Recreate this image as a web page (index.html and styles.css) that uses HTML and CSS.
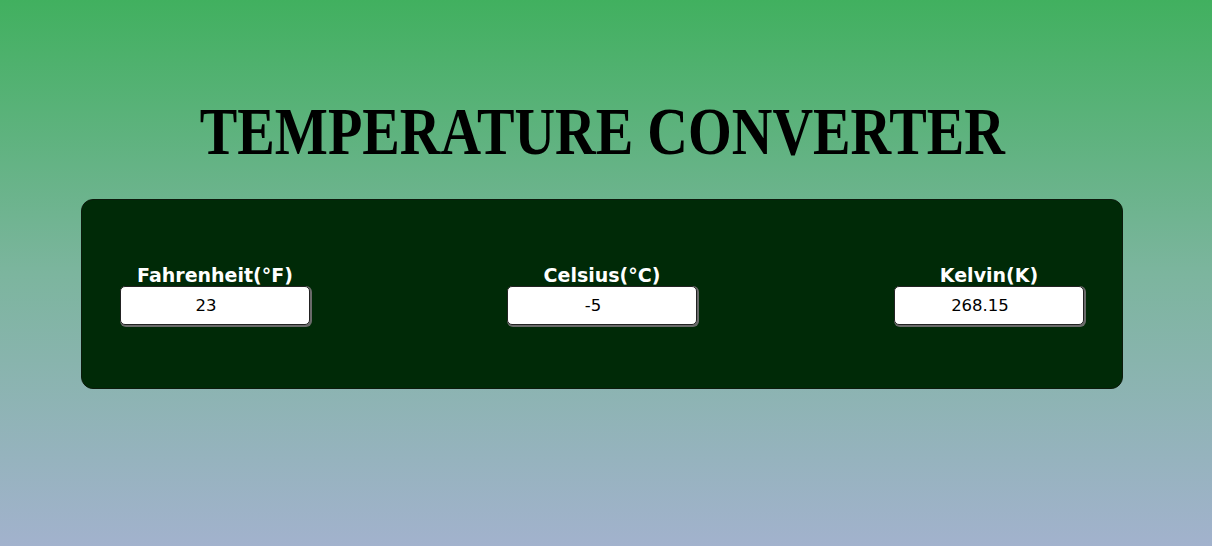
FILE: index.html
```html
<!DOCTYPE html>
<html lang="en">
<head>
<meta charset="utf-8">
<title>Temperature Converter</title>
<link rel="stylesheet" href="styles.css">
</head>
<body>
<main class="page">
  <h1 class="title"><span class="title-text">TEMPERATURE CONVERTER</span></h1>
  <section class="card">
    <div class="field">
      <label class="field-label" for="f">Fahrenheit(°F)</label>
      <input class="field-input" id="f" type="text" value="23">
    </div>
    <div class="field">
      <label class="field-label" for="c">Celsius(°C)</label>
      <input class="field-input" id="c" type="text" value="-5">
    </div>
    <div class="field">
      <label class="field-label" for="k">Kelvin(K)</label>
      <input class="field-input" id="k" type="text" value="268.15">
    </div>
  </section>
</main>
</body>
</html>
```
FILE: styles.css
```css
html, body {
  margin: 0;
  padding: 0;
}
body {
  min-height: 546px;
  background: linear-gradient(to bottom, #41b05f 0%, #7cb59e 50%, #a2b2cd 100%);
  font-family: "DejaVu Sans", Verdana, sans-serif;
}
.page {
  display: flex;
  flex-direction: column;
  align-items: flex-start;
  padding-top: 92px;
}
.title {
  align-self: center;
  margin: 0 8px 0 0;
  font-family: "Liberation Serif", "Times New Roman", serif;
  font-weight: bold;
  font-size: 67px;
  line-height: 78px;
  color: #000;
  white-space: nowrap;
}
.title-text {
  display: inline-block;
  transform: scaleX(0.84);
}
.card {
  margin: 29px 0 0 81px;
  width: 1042px;
  height: 190px;
  box-sizing: border-box;
  background: #002a07;
  border: 1px solid #0c1a0c;
  border-radius: 12px;
  display: flex;
  justify-content: space-between;
  align-items: center;
  padding: 0 38px;
}
.field {
  display: flex;
  flex-direction: column;
  align-items: center;
}
.field-label {
  color: #fff;
  font-weight: bold;
  font-size: 19px;
  line-height: 22px;
}
.field-input {
  box-sizing: border-box;
  width: 190px;
  height: 39px;
  border: 1px solid #222;
  border-radius: 5px;
  box-shadow: 1px 1px 0 1px #6a6a6a;
  background: #fff;
  font-family: "DejaVu Sans", Verdana, sans-serif;
  font-size: 16.5px;
  color: #000;
  text-align: center;
  padding: 0 18px 0 0;
}
```
